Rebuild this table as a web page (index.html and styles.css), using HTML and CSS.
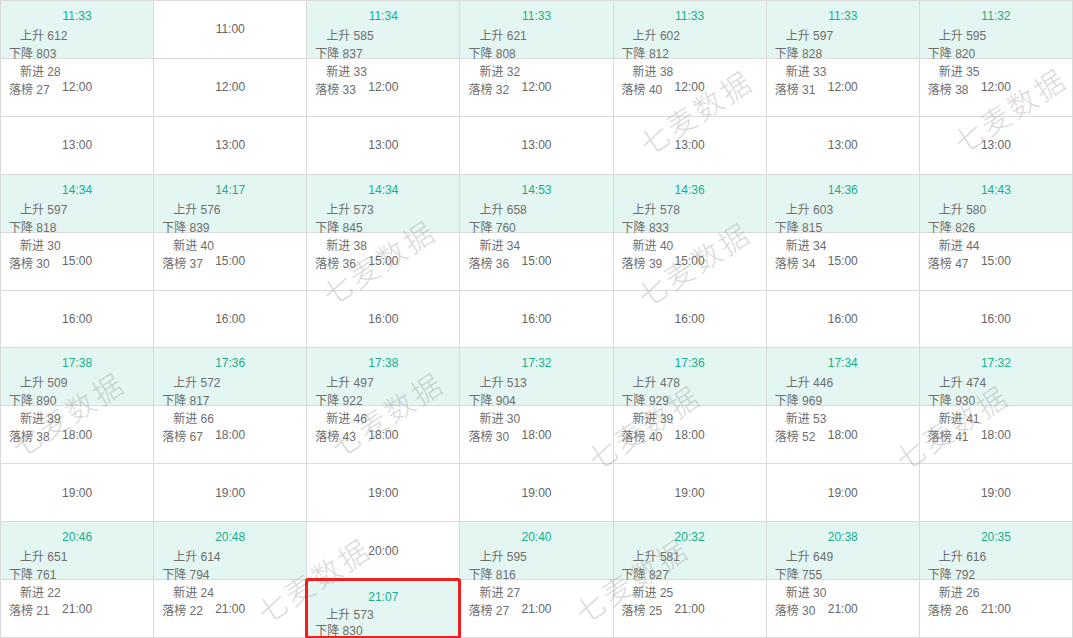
FILE: index.html
```html
<!DOCTYPE html>
<html lang="zh">
<head>
<meta charset="utf-8">
<title>Calendar</title>
<link rel="stylesheet" href="styles.css">
</head>
<body>
<div class="cal">
  <!-- 11 -->
  <div class="cell"><span>11:00</span><div class="ev"><div class="t">11:33</div><div class="a">上升 612</div><div class="b">下降 803</div><div class="a">新进 28</div><div class="b">落榜 27</div></div></div>
  <div class="cell"><span>11:00</span></div>
  <div class="cell"><span>11:00</span><div class="ev"><div class="t">11:34</div><div class="a">上升 585</div><div class="b">下降 837</div><div class="a">新进 33</div><div class="b">落榜 33</div></div></div>
  <div class="cell"><span>11:00</span><div class="ev"><div class="t">11:33</div><div class="a">上升 621</div><div class="b">下降 808</div><div class="a">新进 32</div><div class="b">落榜 32</div></div></div>
  <div class="cell"><span>11:00</span><div class="ev"><div class="t">11:33</div><div class="a">上升 602</div><div class="b">下降 812</div><div class="a">新进 38</div><div class="b">落榜 40</div></div></div>
  <div class="cell"><span>11:00</span><div class="ev"><div class="t">11:33</div><div class="a">上升 597</div><div class="b">下降 828</div><div class="a">新进 33</div><div class="b">落榜 31</div></div></div>
  <div class="cell"><span>11:00</span><div class="ev"><div class="t">11:32</div><div class="a">上升 595</div><div class="b">下降 820</div><div class="a">新进 35</div><div class="b">落榜 38</div></div></div>
  <!-- 12 -->
  <div class="cell"><span>12:00</span></div>
  <div class="cell"><span>12:00</span></div>
  <div class="cell"><span>12:00</span></div>
  <div class="cell"><span>12:00</span></div>
  <div class="cell"><span>12:00</span></div>
  <div class="cell"><span>12:00</span></div>
  <div class="cell"><span>12:00</span></div>
  <!-- 13 -->
  <div class="cell"><span>13:00</span></div>
  <div class="cell"><span>13:00</span></div>
  <div class="cell"><span>13:00</span></div>
  <div class="cell"><span>13:00</span></div>
  <div class="cell"><span>13:00</span></div>
  <div class="cell"><span>13:00</span></div>
  <div class="cell"><span>13:00</span></div>
  <!-- 14 -->
  <div class="cell"><span>14:00</span><div class="ev"><div class="t">14:34</div><div class="a">上升 597</div><div class="b">下降 818</div><div class="a">新进 30</div><div class="b">落榜 30</div></div></div>
  <div class="cell"><span>14:00</span><div class="ev"><div class="t">14:17</div><div class="a">上升 576</div><div class="b">下降 839</div><div class="a">新进 40</div><div class="b">落榜 37</div></div></div>
  <div class="cell"><span>14:00</span><div class="ev"><div class="t">14:34</div><div class="a">上升 573</div><div class="b">下降 845</div><div class="a">新进 38</div><div class="b">落榜 36</div></div></div>
  <div class="cell"><span>14:00</span><div class="ev"><div class="t">14:53</div><div class="a">上升 658</div><div class="b">下降 760</div><div class="a">新进 34</div><div class="b">落榜 36</div></div></div>
  <div class="cell"><span>14:00</span><div class="ev"><div class="t">14:36</div><div class="a">上升 578</div><div class="b">下降 833</div><div class="a">新进 40</div><div class="b">落榜 39</div></div></div>
  <div class="cell"><span>14:00</span><div class="ev"><div class="t">14:36</div><div class="a">上升 603</div><div class="b">下降 815</div><div class="a">新进 34</div><div class="b">落榜 34</div></div></div>
  <div class="cell"><span>14:00</span><div class="ev"><div class="t">14:43</div><div class="a">上升 580</div><div class="b">下降 826</div><div class="a">新进 44</div><div class="b">落榜 47</div></div></div>
  <!-- 15 -->
  <div class="cell"><span>15:00</span></div>
  <div class="cell"><span>15:00</span></div>
  <div class="cell"><span>15:00</span></div>
  <div class="cell"><span>15:00</span></div>
  <div class="cell"><span>15:00</span></div>
  <div class="cell"><span>15:00</span></div>
  <div class="cell"><span>15:00</span></div>
  <!-- 16 -->
  <div class="cell"><span>16:00</span></div>
  <div class="cell"><span>16:00</span></div>
  <div class="cell"><span>16:00</span></div>
  <div class="cell"><span>16:00</span></div>
  <div class="cell"><span>16:00</span></div>
  <div class="cell"><span>16:00</span></div>
  <div class="cell"><span>16:00</span></div>
  <!-- 17 -->
  <div class="cell"><span>17:00</span><div class="ev"><div class="t">17:38</div><div class="a">上升 509</div><div class="b">下降 890</div><div class="a">新进 39</div><div class="b">落榜 38</div></div></div>
  <div class="cell"><span>17:00</span><div class="ev"><div class="t">17:36</div><div class="a">上升 572</div><div class="b">下降 817</div><div class="a">新进 66</div><div class="b">落榜 67</div></div></div>
  <div class="cell"><span>17:00</span><div class="ev"><div class="t">17:38</div><div class="a">上升 497</div><div class="b">下降 922</div><div class="a">新进 46</div><div class="b">落榜 43</div></div></div>
  <div class="cell"><span>17:00</span><div class="ev"><div class="t">17:32</div><div class="a">上升 513</div><div class="b">下降 904</div><div class="a">新进 30</div><div class="b">落榜 30</div></div></div>
  <div class="cell"><span>17:00</span><div class="ev"><div class="t">17:36</div><div class="a">上升 478</div><div class="b">下降 929</div><div class="a">新进 39</div><div class="b">落榜 40</div></div></div>
  <div class="cell"><span>17:00</span><div class="ev"><div class="t">17:34</div><div class="a">上升 446</div><div class="b">下降 969</div><div class="a">新进 53</div><div class="b">落榜 52</div></div></div>
  <div class="cell"><span>17:00</span><div class="ev"><div class="t">17:32</div><div class="a">上升 474</div><div class="b">下降 930</div><div class="a">新进 41</div><div class="b">落榜 41</div></div></div>
  <!-- 18 -->
  <div class="cell"><span>18:00</span></div>
  <div class="cell"><span>18:00</span></div>
  <div class="cell"><span>18:00</span></div>
  <div class="cell"><span>18:00</span></div>
  <div class="cell"><span>18:00</span></div>
  <div class="cell"><span>18:00</span></div>
  <div class="cell"><span>18:00</span></div>
  <!-- 19 -->
  <div class="cell"><span>19:00</span></div>
  <div class="cell"><span>19:00</span></div>
  <div class="cell"><span>19:00</span></div>
  <div class="cell"><span>19:00</span></div>
  <div class="cell"><span>19:00</span></div>
  <div class="cell"><span>19:00</span></div>
  <div class="cell"><span>19:00</span></div>
  <!-- 20 -->
  <div class="cell"><span>20:00</span><div class="ev"><div class="t">20:46</div><div class="a">上升 651</div><div class="b">下降 761</div><div class="a">新进 22</div><div class="b">落榜 21</div></div></div>
  <div class="cell"><span>20:00</span><div class="ev"><div class="t">20:48</div><div class="a">上升 614</div><div class="b">下降 794</div><div class="a">新进 24</div><div class="b">落榜 22</div></div></div>
  <div class="cell"><span>20:00</span></div>
  <div class="cell"><span>20:00</span><div class="ev"><div class="t">20:40</div><div class="a">上升 595</div><div class="b">下降 816</div><div class="a">新进 27</div><div class="b">落榜 27</div></div></div>
  <div class="cell"><span>20:00</span><div class="ev"><div class="t">20:32</div><div class="a">上升 581</div><div class="b">下降 827</div><div class="a">新进 25</div><div class="b">落榜 25</div></div></div>
  <div class="cell"><span>20:00</span><div class="ev"><div class="t">20:38</div><div class="a">上升 649</div><div class="b">下降 755</div><div class="a">新进 30</div><div class="b">落榜 30</div></div></div>
  <div class="cell"><span>20:00</span><div class="ev"><div class="t">20:35</div><div class="a">上升 616</div><div class="b">下降 792</div><div class="a">新进 26</div><div class="b">落榜 26</div></div></div>
  <!-- 21 -->
  <div class="cell"><span>21:00</span></div>
  <div class="cell"><span>21:00</span></div>
  <div class="cell sel"><span class="hidden">21:00</span><div class="ev"><div class="t">21:07</div><div class="a">上升 573</div><div class="b">下降 830</div></div><div class="sel-box"></div></div>
  <div class="cell"><span>21:00</span></div>
  <div class="cell"><span>21:00</span></div>
  <div class="cell"><span>21:00</span></div>
  <div class="cell"><span>21:00</span></div>

  <div class="wm wm1">七麦数据</div>
  <div class="wm wm2">七麦数据</div>
  <div class="wm wm3">七麦数据</div>
  <div class="wm wm4">七麦数据</div>
  <div class="wm wm5">七麦数据</div>
  <div class="wm wm6">七麦数据</div>
  <div class="wm wm7">七麦数据</div>
  <div class="wm wm8">七麦数据</div>
  <div class="wm wm9">七麦数据</div>
  <div class="wm wm10">七麦数据</div>
</div>
</body>
</html>
```

FILE: styles.css
```css
html, body {
  margin: 0;
  padding: 0;
  background: #fff;
}
body {
  font-family: "Liberation Sans", "Noto Sans CJK SC", sans-serif;
  font-size: 12px;
  color: #666;
}
.cal {
  position: relative;
  width: 1073px;
  height: 638px;
  box-sizing: border-box;
  display: grid;
  grid-template-columns: repeat(7, 1fr);
  grid-template-rows: repeat(11, 1fr);
  border-left: 1px solid #dadada;
  border-top: 1px solid #dadada;
  overflow: hidden;
}
.cell {
  position: relative;
  border-right: 1px solid #dadada;
  border-bottom: 1px solid #dadada;
  display: flex;
  align-items: center;
  justify-content: center;
  color: #666;
}
.hidden {
  visibility: hidden;
}
.ev {
  position: absolute;
  left: 0;
  top: 0;
  right: 0;
  height: 100%;
  box-sizing: border-box;
  padding-top: 4px;
  background: #e3f6f1;
  z-index: 1;
  line-height: 18px;
  white-space: nowrap;
  color: #6e6e6e;
}
.ev .t {
  text-align: center;
  color: #19ae8a;
  line-height: 22px;
}
.ev .a {
  padding-left: 19px;
}
.ev .b {
  padding-left: 8px;
}
.sel .ev {
  padding-top: 7px;
  line-height: 16px;
}
.sel .ev .t {
  line-height: 20px;
}
.sel-box {
  position: absolute;
  left: -2px;
  top: -2px;
  right: -2px;
  bottom: -2px;
  border: 3px solid #f01e1e;
  border-radius: 3px;
  z-index: 3;
}
.wm {
  position: absolute;
  z-index: 2;
  pointer-events: none;
  white-space: nowrap;
  font-family: "Noto Sans CJK SC", sans-serif;
  font-weight: 300;
  font-size: 29px;
  letter-spacing: 3px;
  color: rgba(140, 140, 140, 0.34);
  transform: translate(-50%, -50%) rotate(-33deg);
}
.wm1 { left: 694px; top: 110px; }
.wm2 { left: 1008px; top: 108px; }
.wm3 { left: 377px; top: 260px; }
.wm4 { left: 692px; top: 262px; }
.wm5 { left: 66px; top: 412px; }
.wm6 { left: 385px; top: 412px; }
.wm7 { left: 642px; top: 425px; }
.wm8 { left: 950px; top: 425px; }
.wm9 { left: 312px; top: 578px; }
.wm10 { left: 630px; top: 578px; }
```
